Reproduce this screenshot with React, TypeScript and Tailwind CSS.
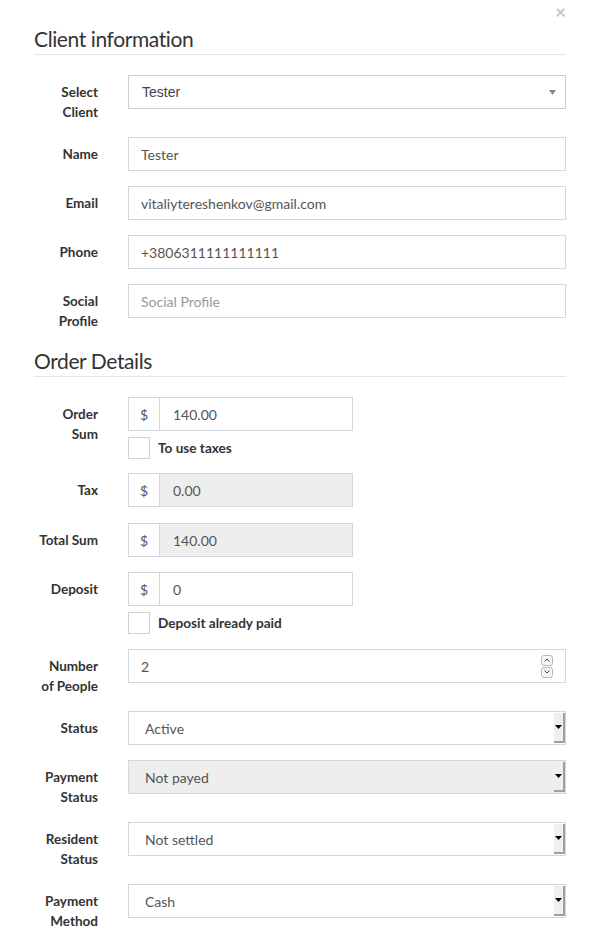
import type { ReactNode } from "react";

const font = { fontFamily: "Lato, 'Open Sans', sans-serif" };

function Label({ children }: { children: ReactNode }) {
  return (
    <div className="w-[64px] shrink-0 pt-[7px] text-right text-[13.5px] font-bold leading-[20px] text-[#333]">
      {children}
    </div>
  );
}

function Row({ label, children, extra = "mb-[15px]" }: { label: ReactNode; children: ReactNode; extra?: string }) {
  return (
    <div className={`flex gap-[30px] ${extra}`}>
      <Label>{label}</Label>
      <div className="min-w-0 flex-1">{children}</div>
    </div>
  );
}

function TextInput({ value, placeholder }: { value?: string; placeholder?: string }) {
  return (
    <div className="flex h-[34px] items-center border border-[#d2d6de] bg-white px-[12px] text-[14px] text-[#555]">
      {value ? value : <span className="text-[#999]">{placeholder}</span>}
    </div>
  );
}

function MoneyInput({ value, disabled }: { value: string; disabled?: boolean }) {
  return (
    <div className="flex h-[34px] w-[225px] border border-[#d2d6de] text-[14px] text-[#555]">
      <div className="flex w-[31px] shrink-0 items-center justify-center border-r border-[#d2d6de] bg-white">
        $
      </div>
      <div className={`flex flex-1 items-center pl-[13px] pr-[12px] ${disabled ? "bg-[#eeeeee]" : "bg-white"}`}>
        {value}
      </div>
    </div>
  );
}

function Check({ label }: { label: string }) {
  return (
    <div className="mb-[-1px] mt-[6px] flex h-[22px] items-center gap-[8px]">
      <div className="h-[22px] w-[22px] border border-[#d4d0cc] bg-white" />
      <span className="text-[13.6px] font-bold text-[#333]">{label}</span>
    </div>
  );
}

function NativeSelect({ value, disabled }: { value: string; disabled?: boolean }) {
  return (
    <div
      className={`flex h-[34px] items-stretch border border-[#d2d6de] text-[14px] text-[#555] ${
        disabled ? "bg-[#eeeeee]" : "bg-white"
      }`}
    >
      <div className="flex flex-1 items-center px-[16px]">{value}</div>
      <div className="my-[1px] flex w-[11px] items-center justify-center border-b-2 border-r-2 border-[#a0a0a0] bg-[#efefef]">
        <svg width="7" height="4" viewBox="0 0 7 4">
          <path d="M0 0h7L3.5 4z" fill="#000" />
        </svg>
      </div>
    </div>
  );
}

function NumberInput({ value }: { value: string }) {
  return (
    <div className="flex h-[34px] items-center border border-[#d2d6de] bg-white pl-[12px] pr-[12px] text-[14px] text-[#555]">
      <span className="flex-1">{value}</span>
      <div className="flex flex-col gap-[1px]">
        <div className="flex h-[11px] w-[12px] items-center justify-center rounded-[3px] border border-[#b8b8b8] bg-[#f7f7f7]">
          <svg width="6" height="4" viewBox="0 0 6 4">
            <path d="M0.5 3.5L3 1l2.5 2.5" stroke="#444" fill="none" />
          </svg>
        </div>
        <div className="flex h-[11px] w-[12px] items-center justify-center rounded-[3px] border border-[#b8b8b8] bg-[#f7f7f7]">
          <svg width="6" height="4" viewBox="0 0 6 4">
            <path d="M0.5 0.5L3 3l2.5-2.5" stroke="#444" fill="none" />
          </svg>
        </div>
      </div>
    </div>
  );
}

function Heading({ children }: { children: ReactNode }) {
  return (
    <div className="mb-[20px] border-b border-[#e5e5e5] text-[21px] leading-[30px] tracking-[-0.4px] text-[#333]">
      {children}
    </div>
  );
}

export default function App() {
  return (
    <div className="relative min-h-screen bg-white px-[34px] pt-[24px]" style={font}>
      <span className="absolute right-[34px] top-[2px] text-[19px] font-bold leading-[20px] text-[#c6c6c6]">
        ×
      </span>

      <Heading>Client information</Heading>

      <Row label={<>Select<br />Client</>}>
        <div className="flex h-[34px] items-center border border-[#cfcfcf] bg-white pl-[13px] pr-[9px] text-[14px] text-[#444]" style={{ fontFamily: "'Liberation Sans', Arial, sans-serif" }}>
          <span className="flex-1">Tester</span>
          <svg width="7" height="5" viewBox="0 0 7 5">
            <path d="M0 0h7L3.5 5z" fill="#888" />
          </svg>
        </div>
      </Row>
      <Row label="Name">
        <TextInput value="Tester" />
      </Row>
      <Row label="Email">
        <TextInput value="vitaliytereshenkov@gmail.com" />
      </Row>
      <Row label="Phone">
        <TextInput value="+3806311111111111" />
      </Row>
      <Row label={<>Social<br />Profile</>}>
        <TextInput placeholder="Social Profile" />
      </Row>

      <Heading>Order Details</Heading>

      <Row label={<>Order<br />Sum</>}>
        <MoneyInput value="140.00" />
        <Check label="To use taxes" />
      </Row>
      <Row label="Tax" extra="mb-[16px]">
        <MoneyInput value="0.00" disabled />
      </Row>
      <Row label="Total Sum">
        <MoneyInput value="140.00" disabled />
      </Row>
      <Row label="Deposit" extra="mb-[16px]">
        <MoneyInput value="0" />
        <Check label="Deposit already paid" />
      </Row>
      <Row label={<>Number<br /><span className="whitespace-nowrap">of People</span></>}>
        <NumberInput value="2" />
      </Row>
      <Row label="Status">
        <NativeSelect value="Active" />
      </Row>
      <Row label={<>Payment<br />Status</>}>
        <NativeSelect value="Not payed" disabled />
      </Row>
      <Row label={<>Resident<br />Status</>}>
        <NativeSelect value="Not settled" />
      </Row>
      <Row label={<>Payment<br />Method</>}>
        <NativeSelect value="Cash" />
      </Row>
    </div>
  );
}
